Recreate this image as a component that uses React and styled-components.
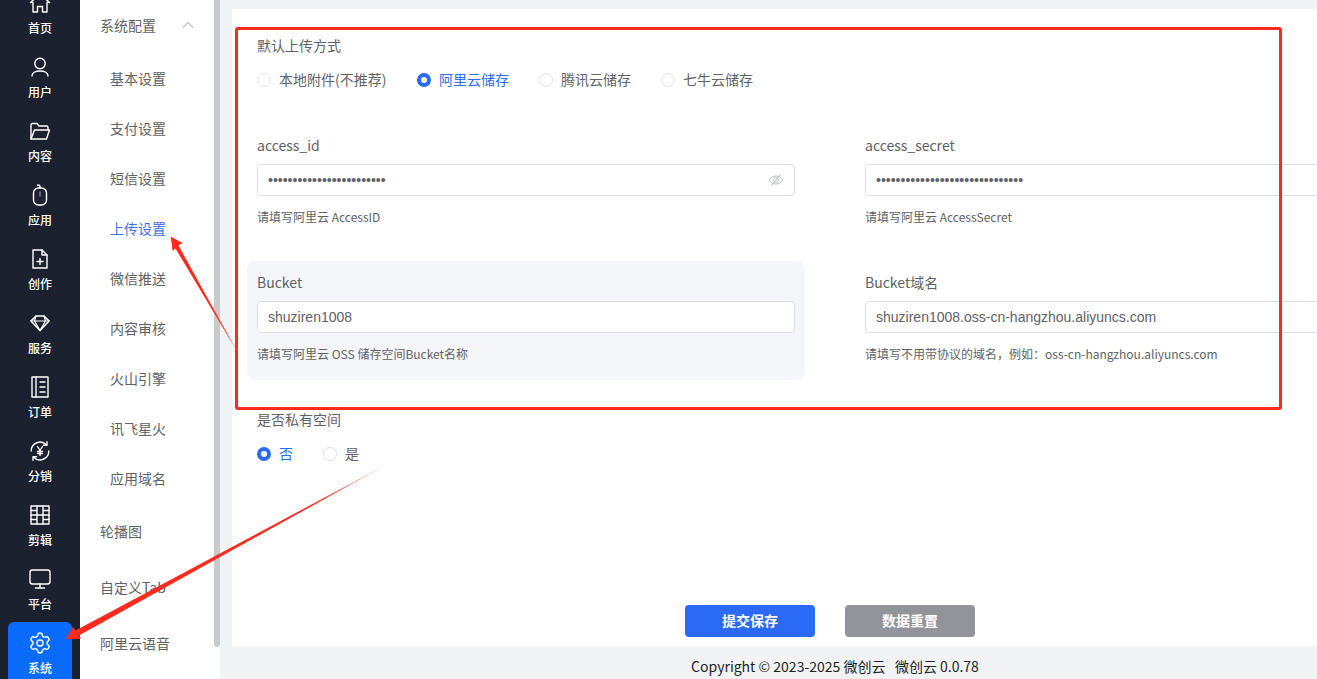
import React from "react";
import styled, { createGlobalStyle } from "styled-components";
import { Settings, ChevronUp } from "lucide-react";

const cjk = `"Noto Sans CJK SC", "Noto Sans", sans-serif`;

const Global = createGlobalStyle`
  html, body { margin: 0; padding: 0; height: 100%; overflow: hidden; }
  body { font-family: ${cjk}; background: #f2f3f5; }
  * { box-sizing: border-box; }
`;

const Page = styled.div`
  position: relative;
  display: flex;
  width: 100vw;
  height: 100vh;
  overflow: hidden;
`;

const Rail = styled.nav`
  flex: 0 0 80px;
  height: 100%;
  overflow: hidden;
  background: #1c2130;
  display: flex;
  flex-direction: column;
  align-items: center;
`;

const RailInner = styled.div`
  margin-top: -18px;
  display: flex;
  flex-direction: column;
  align-items: center;
`;

const RailItem = styled.div`
  flex: 0 0 64px;
  width: 64px;
  height: 64px;
  display: flex;
  flex-direction: column;
  align-items: center;
  padding-top: 9px;
  color: #fff;
  border-radius: 6px;
  background: ${(p) => (p.$active ? "#0a6cff" : "transparent")};
  svg { display: block; flex: 0 0 24px; }
`;

const RailLabel = styled.span`
  display: block;
  margin-top: 1px;
  font-size: 12px;
  line-height: 24px;
  font-weight: 500;
  color: #fff;
`;

const Icon = styled.svg.attrs({
  viewBox: "0 0 24 24",
  width: 24,
  height: 24,
  fill: "none",
  stroke: "currentColor",
  strokeWidth: 1.4,
  strokeLinejoin: "round",
  strokeLinecap: "round",
})``;

const EyeIcon = styled.svg.attrs({
  viewBox: "0 0 16 16",
  width: 16,
  height: 16,
  fill: "none",
  stroke: "currentColor",
  strokeWidth: 1,
})`
  flex: 0 0 16px;
  color: #bdbfc4;
`;

const Menu = styled.aside`
  flex: 0 0 140px;
  height: 100%;
  display: flex;
  background: #fff;
`;

const MenuList = styled.div`
  flex: 1;
  min-width: 0;
  overflow: hidden;
`;

const MenuGroup = styled.div`
  height: 50px;
  margin-bottom: 3px;
  padding-left: 20px;
  padding-right: 16px;
  display: flex;
  align-items: center;
  justify-content: space-between;
  font-size: 14px;
  color: #606266;
  svg { color: #606266; }
`;

const MenuLink = styled.div`
  height: 50px;
  padding-left: 30px;
  display: flex;
  align-items: center;
  font-size: 14px;
  color: ${(p) => (p.$active ? "#3d6ff2" : "#606266")};
`;

const MenuTop = styled.div`
  height: 56px;
  padding-left: 20px;
  display: flex;
  align-items: center;
  font-size: 14px;
  color: #606266;
`;

const Scroll = styled.div`
  flex: 0 0 6px;
  height: 647px;
  background: #c9c9c9;
  border-radius: 0 0 3px 3px;
`;

const Main = styled.main`
  flex: 0 0 1230px;
  height: 100%;
  display: flex;
  flex-direction: column;
  padding-top: 9px;
  background: #f2f3f5;
`;

const Card = styled.section`
  width: 1196px;
  margin-left: 12px;
  height: 637px;
  flex: 0 0 637px;
  background: #fff;
  padding: 15px 0 9px 15px;
  display: flex;
  flex-direction: column;
`;

const FormGrid = styled.div`
  display: grid;
  grid-template-columns: 558px 558px;
  column-gap: 50px;
  row-gap: 18px;
`;

const FormItem = styled.div`
  grid-column: ${(p) => (p.$wide ? "1 / -1" : "auto")};
  padding: 12px 10px 16px;
  border-radius: 8px;
  background: ${(p) => (p.$highlight ? "#f5f6fa" : "transparent")};
`;

const Label = styled.div`
  font-size: 14px;
  line-height: 20px;
  color: #606266;
  margin-top: -1px;
  margin-bottom: 9px;
`;

const RadioRow = styled.div`
  display: flex;
  align-items: center;
  height: 20px;
  margin-top: 14px;
  margin-bottom: 1px;
`;

const Radio = styled.label`
  display: flex;
  align-items: center;
  gap: 8px;
  margin-right: ${(p) => p.$trail || 30}px;
  font-size: 14px;
  line-height: 20px;
  color: ${(p) => (p.$on ? "#2a6af5" : "#606266")};
`;

const RadioDot = styled.span`
  flex: 0 0 14px;
  width: 14px;
  height: 14px;
  margin-top: 2px;
  border-radius: 50%;
  background: #fff;
  border: ${(p) => (p.$on ? "4px solid #2a6af5" : "1px solid #dcdfe6")};
`;

const InputBox = styled.div`
  height: 32px;
  display: flex;
  align-items: center;
  padding: 0 10px;
  background: #fff;
  border: 1px solid #dcdfe6;
  border-radius: 4px;
`;

const Field = styled.input`
  flex: 1;
  min-width: 0;
  height: 100%;
  border: 0;
  outline: 0;
  padding: 0;
  background: transparent;
  font-family: "Liberation Sans", Arial, sans-serif;
  font-size: 14px;
  color: #606266;
`;

const Hint = styled.div`
  margin-top: 11px;
  font-size: 12px;
  line-height: 20px;
  color: #606266;
`;

const Actions = styled.div`
  margin-top: auto;
  margin-left: -15px;
  display: flex;
  justify-content: center;
  gap: 30px;
`;

const Button = styled.button`
  width: 130px;
  height: 32px;
  border: 0;
  border-radius: 4px;
  padding: 0 0 3px;
  font-family: ${cjk};
  font-size: 14px;
  font-weight: 700;
  color: #fff;
  background: ${(p) => (p.$muted ? "#939499" : "#2a6af5")};
`;

const Footer = styled.footer`
  flex: 1;
  display: flex;
  align-items: center;
  justify-content: center;
  padding-top: 6px;
  font-size: 14px;
  color: #1c1f26;
  white-space: pre;
`;

const RedBox = styled.div`
  position: absolute;
  left: 235px;
  top: 27px;
  width: 1047px;
  height: 383px;
  border: 3px solid #ff2a1e;
  border-radius: 3px;
  pointer-events: none;
`;

const Arrows = styled.svg`
  position: absolute;
  left: 0;
  top: 0;
  pointer-events: none;
`;

const nav = [
  ["首页", <Icon key="a"><path d="M2.5 11.5 12 3l9.5 8.5H19v9.5h-4.5v-5.5h-5V21H5v-9.5Z" /></Icon>],
  ["用户", <Icon key="a"><circle cx="12" cy="8.5" r="5.2" /><path d="M4 21c0-3 3.5-5 8-5s8 2 8 5" /></Icon>],
  ["内容", <Icon key="a"><path d="M3 20V6a1.5 1.5 0 0 1 1.5-1.5H9l2 2.5h7.5A1.5 1.5 0 0 1 20 8.5V11" /><path d="M3 20l3.5-9H21.5L18.5 20Z" /></Icon>],
  ["应用", <Icon key="a"><rect x="5.5" y="5" width="13" height="17" rx="5" /><path d="M12 5V3.5C12 2.5 11 2 9.5 2" /><path d="M12 9v4" opacity="0.45" /></Icon>],
  ["创作", <Icon key="a"><path d="M5 3h9l5 5v13H5Z" /><path d="M14 3v5h5" /><path d="M12 11.5v6M9 14.5h6" /></Icon>],
  ["服务", <Icon key="a"><path d="M8 5h8l5 5-9 9.5L3 10Z" strokeWidth="1.7" /><path d="M3 10h18M8 5l-1.5 5L12 19.5 17.5 10 16 5" strokeWidth="1.2" /></Icon>],
  ["订单", <Icon key="a"><rect x="4" y="2" width="16" height="20" /><path d="M8 2v20M12 7h5M12 12h5M12 17h5" /></Icon>],
  ["分销", <Icon key="a"><path d="M3.2 12A8.8 8.8 0 0 1 18.5 6M20.8 12A8.8 8.8 0 0 1 5.5 18" /><path d="M19 2.8V6.3h-3.5M5 21.2V17.7h3.5" /><path d="M9.5 7.5l2.5 4 2.5-4M12 11.5v5M9.5 12.500h5M9.5 14.500h5" strokeWidth="1.4" /></Icon>],
  ["剪辑", <Icon key="a"><rect x="3" y="3" width="18" height="18" /><path d="M9 3v18M15 3v18M3 7.5h6M3 12h18M3 16.5h6M15 7.5h6M15 16.5h6" /></Icon>],
  ["平台", <Icon key="a"><rect x="2" y="3" width="20" height="14" rx="2.5" /><path d="M12 17v4M7.5 21h9" /></Icon>],
  ["系统", <Settings key="a" size={24} strokeWidth={1.4} />, true],
];

const sub = ["基本设置", "支付设置", "短信设置", "上传设置", "微信推送", "内容审核", "火山引擎", "讯飞星火", "应用域名"];

const dots = (n) => "•".repeat(n);

export default function App() {
  return (
    <Page>
      <Global />
      <Rail>
        <RailInner>
          {nav.map(([label, icon, active]) => (
            <RailItem key={label} $active={active}>
              {icon}
              <RailLabel>{label}</RailLabel>
            </RailItem>
          ))}
        </RailInner>
      </Rail>
      <Menu>
        <MenuList>
          <MenuGroup>
            系统配置
            <ChevronUp size={20} strokeWidth={0.8} />
          </MenuGroup>
          {sub.map((s) => (
            <MenuLink key={s} $active={s === "上传设置"}>{s}</MenuLink>
          ))}
          <MenuTop>轮播图</MenuTop>
          <MenuTop>自定义Tab</MenuTop>
          <MenuTop>阿里云语音</MenuTop>
        </MenuList>
        <Scroll />
      </Menu>
      <Main>
        <Card>
          <FormGrid>
            <FormItem $wide>
              <Label>默认上传方式</Label>
              <RadioRow>
                <Radio $trail={30.5}><RadioDot />本地附件(不推荐)</Radio>
                <Radio $on><RadioDot $on />阿里云储存</Radio>
                <Radio><RadioDot />腾讯云储存</Radio>
                <Radio><RadioDot />七牛云储存</Radio>
              </RadioRow>
            </FormItem>
            <FormItem>
              <Label>access_id</Label>
              <InputBox>
                <Field type="text" readOnly value={dots(24)} />
                <EyeIcon>
                  <path d="M1 8C2.8 5.3 5.2 4 8 4S13.2 5.3 15 8C13.2 10.7 10.8 12 8 12S2.8 10.7 1 8Z" />
                  <circle cx="8" cy="8" r="2.4" />
                  <path d="M13 2 3 14" />
                </EyeIcon>
              </InputBox>
              <Hint>请填写阿里云 AccessID</Hint>
            </FormItem>
            <FormItem>
              <Label>access_secret</Label>
              <InputBox>
                <Field type="text" readOnly value={dots(30)} />
              </InputBox>
              <Hint>请填写阿里云 AccessSecret</Hint>
            </FormItem>
            <FormItem $highlight>
              <Label>Bucket</Label>
              <InputBox>
                <Field type="text" readOnly value="shuziren1008" />
              </InputBox>
              <Hint>请填写阿里云 OSS 储存空间Bucket名称</Hint>
            </FormItem>
            <FormItem>
              <Label>Bucket域名</Label>
              <InputBox>
                <Field type="text" readOnly value="shuziren1008.oss-cn-hangzhou.aliyuncs.com" />
              </InputBox>
              <Hint>请填写不用带协议的域名，例如：oss-cn-hangzhou.aliyuncs.com</Hint>
            </FormItem>
            <FormItem $wide>
              <Label>是否私有空间</Label>
              <RadioRow>
                <Radio $on><RadioDot $on />否</Radio>
                <Radio><RadioDot />是</Radio>
              </RadioRow>
            </FormItem>
          </FormGrid>
          <Actions>
            <Button>提交保存</Button>
            <Button $muted>数据重置</Button>
          </Actions>
        </Card>
        <Footer>Copyright © 2023-2025 微创云   微创云 0.0.78</Footer>
      </Main>
      <RedBox />
      <Arrows width="1317" height="679" viewBox="0 0 1317 679">
        <defs>
          <linearGradient id="fade" gradientUnits="userSpaceOnUse" x1="66" y1="639" x2="387" y2="464">
            <stop offset="0" stopColor="#ff2a1e" />
            <stop offset="0.8" stopColor="#ff2a1e" />
            <stop offset="1" stopColor="#ff2a1e" stopOpacity="0.35" />
          </linearGradient>
        </defs>
        <polygon fill="#ff2a1e" points="170.7,236.5 182.5,243 178.5,245.5 238,353 175.5,248.5 172.7,251" />
        <polygon fill="url(#fade)" points="66,639 73,627 75.500,630.500 387.500,464 79,635.500 81,639" />
      </Arrows>
    </Page>
  );
}
